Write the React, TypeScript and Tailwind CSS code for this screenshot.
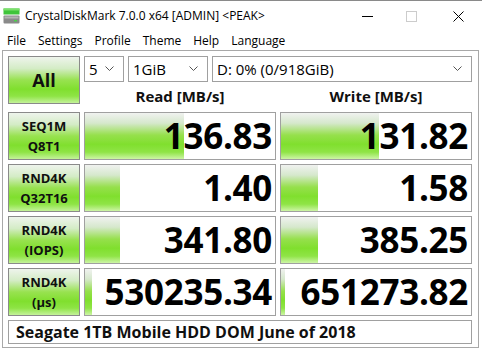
import React from "react";

const ui = { fontFamily: '"Open Sans", "Noto Sans", sans-serif' };

const greenBtn =
  "bg-[linear-gradient(to_bottom,#eef4ec_0%,#d4ecc6_25%,#98e250_50%,#80df2e_70%,#8ee445_85%,#c4f29a_100%)]";
const barGrad =
  "bg-[linear-gradient(to_bottom,#f0f2f0_0%,#d6e8cc_22%,#96e04c_48%,#80df2e_68%,#8fe446_85%,#cdf5a6_100%)]";

function Chevron() {
  return (
    <svg width="9" height="6" viewBox="0 0 9 6" className="shrink-0">
      <polyline points="0.5,0.5 4.5,4.5 8.5,0.5" fill="none" stroke="#555" strokeWidth="1" />
    </svg>
  );
}

function Select({ w, text }: { w: string; text: string }) {
  return (
    <div className={`${w} h-[26px] border border-[#a0a0a0] bg-white flex items-center justify-between pl-[4px] pr-[9px]`}>
      <span className="text-[15px] text-black leading-none">{text}</span>
      <Chevron />
    </div>
  );
}

function TestButton({ l1, l2 }: { l1: string; l2: string }) {
  return (
    <div className={`h-[48px] border border-[#8a8a8a] ${greenBtn} flex flex-col items-center justify-center font-bold text-[13px] leading-[20px] text-[#101010]`}>
      <span>{l1}</span>
      <span>{l2}</span>
    </div>
  );
}

function Cell({ value, bar }: { value: string; bar: number }) {
  return (
    <div className="relative h-[48px] border border-[#a0a0a0] bg-white overflow-hidden">
      <div className={`absolute left-0 top-0 bottom-0 ${barGrad}`} style={{ width: bar }} />
      <div className="relative h-full flex items-center justify-end pr-[3px] text-[35px] font-bold text-black leading-none tracking-[-0.3px]">
        {value}
      </div>
    </div>
  );
}

export default function App() {
  const rows = [
    { l1: "SEQ1M", l2: "Q8T1", r: "136.83", rb: 99, w: "131.82", wb: 98 },
    { l1: "RND4K", l2: "Q32T16", r: "1.40", rb: 35, w: "1.58", wb: 37 },
    { l1: "RND4K", l2: "(IOPS)", r: "341.80", rb: 35, w: "385.25", wb: 37 },
    { l1: "RND4K", l2: "(μs)", r: "530235.34", rb: 7, w: "651273.82", wb: 4 },
  ];
  return (
    <div style={ui} className="w-[482px] h-[351px] bg-white border-t border-[#8a8a8a] overflow-hidden text-black">
      {/* Title bar */}
      <div className="h-[30px] flex items-center">
        <svg width="17" height="17" viewBox="0 0 17 17" className="ml-[3px] mt-[1px]">
          <rect x="0.5" y="0.5" width="16" height="6" fill="#3fc43a" />
          <rect x="0.5" y="0.5" width="16" height="2" fill="#7be06a" />
          <rect x="0.5" y="7.5" width="16" height="8" rx="1" fill="#8a8a8a" />
          <rect x="1.5" y="8.5" width="14" height="2" fill="#b4b4b4" />
          <rect x="11" y="12" width="3" height="1.5" fill="#4ad14a" />
        </svg>
        <span className="ml-[5px] text-[12px] text-black">CrystalDiskMark 7.0.0 x64 [ADMIN] &lt;PEAK&gt;</span>
        <div className="flex-1" />
        <svg width="11" height="11" viewBox="0 0 11 11" className="mr-[33px]">
          <line x1="0" y1="5.5" x2="11" y2="5.5" stroke="#000" strokeWidth="1" />
        </svg>
        <svg width="11" height="11" viewBox="0 0 11 11" className="mr-[36px]">
          <rect x="0.5" y="0.5" width="10" height="10" fill="none" stroke="#cccccc" strokeWidth="1" />
        </svg>
        <svg width="11" height="11" viewBox="0 0 11 11" className="mr-[18px]">
          <line x1="0.5" y1="0.5" x2="10.5" y2="10.5" stroke="#000" strokeWidth="1" />
          <line x1="10.5" y1="0.5" x2="0.5" y2="10.5" stroke="#000" strokeWidth="1" />
        </svg>
      </div>
      {/* Menu bar */}
      <div className="h-[19px] flex items-center text-[12px] pl-[7px] gap-[12px]">
        <span>File</span>
        <span>Settings</span>
        <span>Profile</span>
        <span>Theme</span>
        <span>Help</span>
        <span>Language</span>
      </div>
      {/* Main frame */}
      <div className="ml-[2px] w-[477px] h-[298px] border border-[#a8a8a8] bg-white pl-[5px] pt-[5px]">
        <div className="grid grid-cols-[72px_192px_192px] gap-x-[4px] gap-y-[4px]">
          <div className={`h-[48px] border border-[#8a8a8a] ${greenBtn} flex items-center justify-center font-bold text-[18px] text-[#101010]`}>
            All
          </div>
          <div className="col-span-2 flex flex-col">
            <div className="flex gap-[4px]">
              <Select w="w-[40px]" text="5" />
              <Select w="w-[80px]" text="1GiB" />
              <Select w="w-[260px]" text="D: 0% (0/918GiB)" />
            </div>
            <div className="flex-1 grid grid-cols-[192px_192px] gap-x-[4px] items-center font-bold text-[15px] text-[#101010]">
              <div className="text-center pt-[3px]">Read [MB/s]</div>
              <div className="text-center pt-[3px]">Write [MB/s]</div>
            </div>
          </div>
          {rows.map((r, i) => (
            <React.Fragment key={i}>
              <TestButton l1={r.l1} l2={r.l2} />
              <Cell value={r.r} bar={r.rb} />
              <Cell value={r.w} bar={r.wb} />
            </React.Fragment>
          ))}
          <div className="col-span-3 h-[24px] border border-[#a0a0a0] bg-white flex items-center pl-[7px] font-bold text-[16px] text-[#101010]">
            Seagate 1TB Mobile HDD DOM June of 2018
          </div>
        </div>
      </div>
    </div>
  );
}
